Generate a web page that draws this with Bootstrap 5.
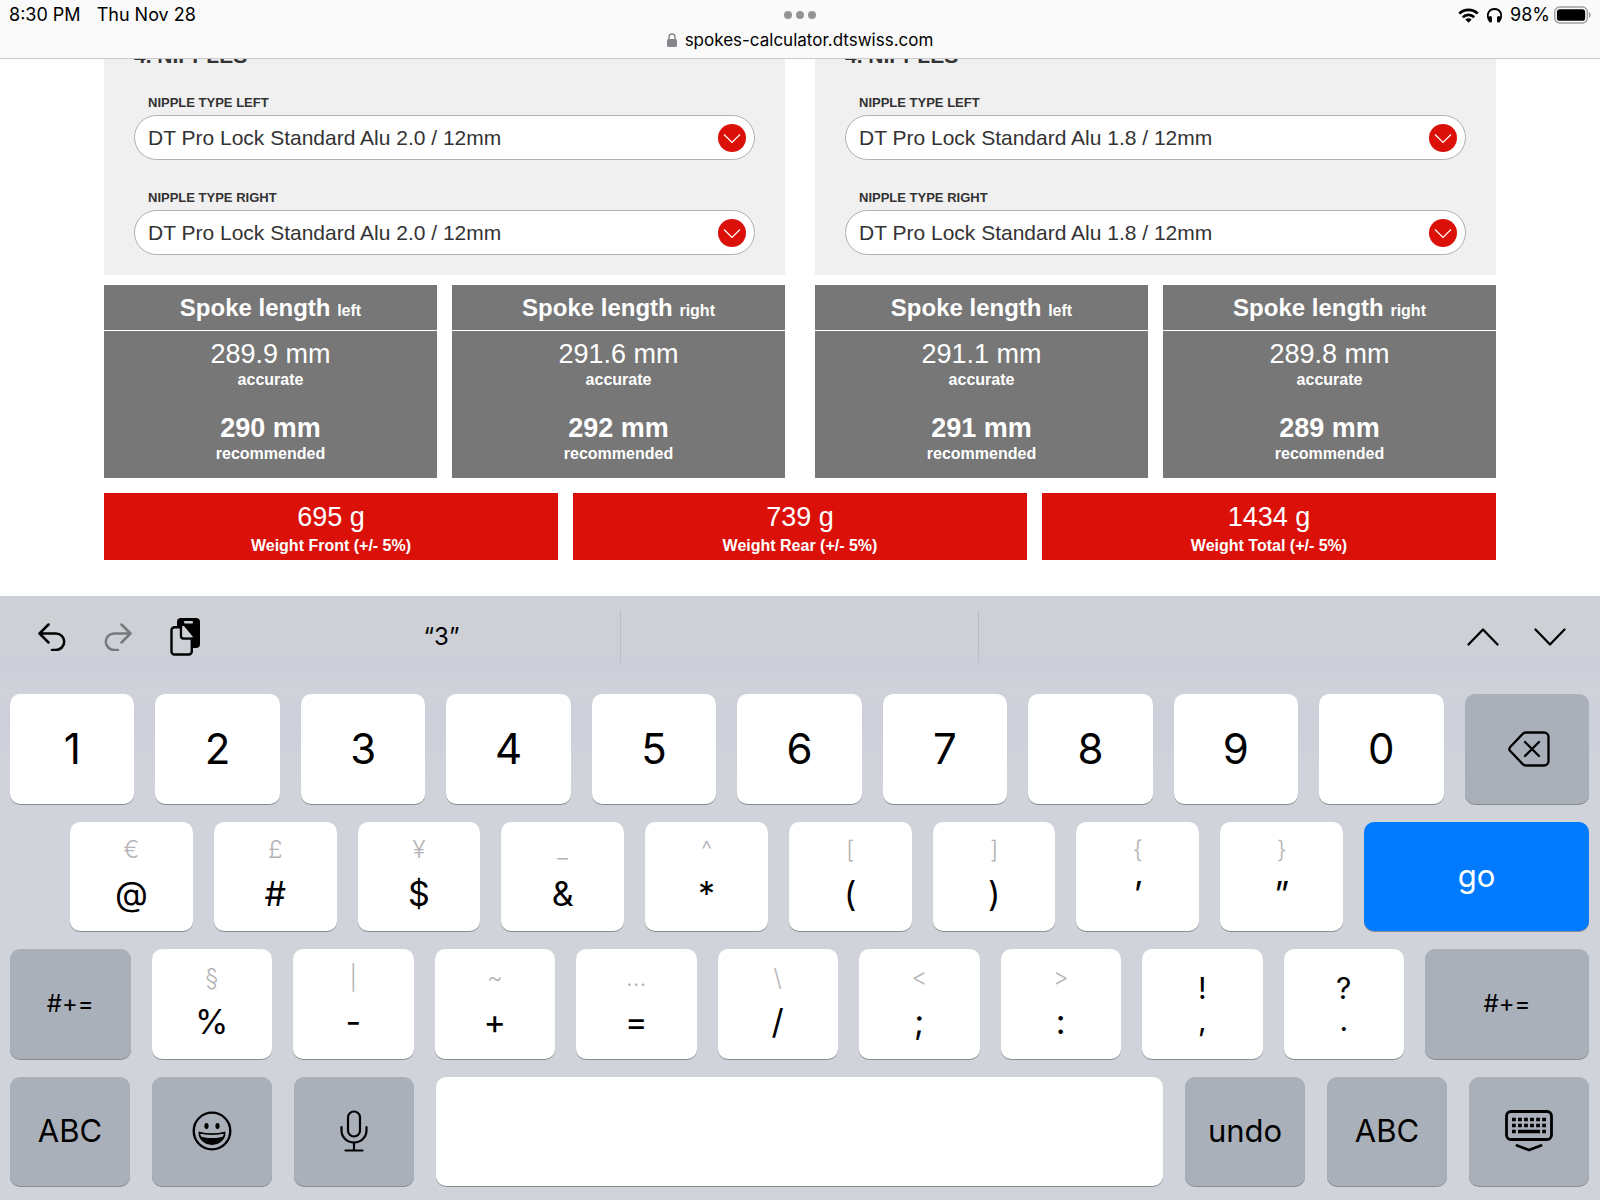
<!DOCTYPE html>
<html lang="en">
<head>
<meta charset="utf-8">
<meta name="viewport" content="width=device-width, initial-scale=1">
<title>DT Swiss Spokes Calculator</title>
<link rel="stylesheet" href="https://cdn.jsdelivr.net/npm/bootstrap@5.3.0/dist/css/bootstrap.min.css">
<style>
  body { font-family: "Liberation Sans", Arial, sans-serif; color: #333; background: #fff; }
  .ios { font-family: Inter, Roboto, sans-serif; color: #000; }

  /* browser bar */
  .topbar { background: #fafafa; border-bottom: 1px solid #c9c9cb; font-size: 18px; line-height: 20px; padding: 5px 9px 3px; }
  .topbar .side { flex: 1 1 0; }
  .url { font-size: 17px; line-height: 22px; margin-top: 4px; padding-bottom: 4px; color: #000; }

  /* calculator */
  .calc { padding: 0 104px 36px; }
  .gap-wide { gap: 30px; }
  .gap-slim { gap: 15px; }
  .half { flex: 1 1 0; min-width: 0; }
  .panel { background: #f0f0f0; padding: 0 30px 20px; margin-bottom: 10px; }
  .panel h2 { font-size: 21px; line-height: 24px; font-weight: 700; margin: -15px 0 27px; color: #333; }
  .panel label { display: block; font-size: 13px; line-height: 16px; font-weight: 700; margin: 0 0 4px 14px; }
  .panel .field + .field { margin-top: 30px; }
  .panel .form-select {
    height: 45px; border: 1px solid #b0b0b0; border-radius: 23px;
    font-size: 21px; line-height: 24px; color: #333; padding: 0 48px 0 13px;
    background: #fff url("data:image/svg+xml,%3Csvg xmlns='http://www.w3.org/2000/svg' viewBox='0 0 28 28'%3E%3Ccircle cx='14' cy='14' r='14' fill='%23db1109'/%3E%3Cpath d='M6 10.500l8 8 8-8' fill='none' stroke='%23fff' stroke-width='1.200'/%3E%3C/svg%3E") no-repeat right 8px center / 28px 28px;
  }
  .result { background: #777; color: #fff; text-align: center; }
  .result h3 { font-size: 24px; line-height: 45px; font-weight: 700; margin: 0; border-bottom: 1px solid #fff; }
  .result h3 span { font-size: 16px; line-height: 16px; }
  .result dl { margin: 0; padding: 8px 0 14px; display: flex; flex-direction: column; }
  .num { font-size: 27px; line-height: 30px; font-weight: 400; margin: 0; }
  .cap { font-size: 16px; line-height: 21px; font-weight: 700; margin: 0; }
  .rec { margin-top: 23px; }
  .weights { padding-top: 15px; }
  .weight { background: #db1109; color: #fff; text-align: center; padding: 9px 0 4px; }
  .weight .cap { margin-top: 3px; }

  /* on-screen keyboard */
  .kbd-area { background: linear-gradient(#cdd0d4 0, #cdd0d6 50px, #cccfda 75px, #cfd2d8 95px, #cdd0da 120px, #d0d3d9 190px); padding: 0 11px 14px 10px; }
  .tools { height: 82px; margin-bottom: 16px; }
  .tools .edge { width: 253px; }
  .tools .edit { gap: 38px; padding-left: 28px; }
  .tools .step { gap: 35px; padding-right: 23px; }
  .tools button { background: none; border: 0; padding: 0; line-height: 0; color: #000; }
  .tools .hint { font-size: 24px; line-height: 52px; height: 52px; }
  .hint + .hint { border-left: 1px solid #babdc3; }
  .keys { gap: 18px; }
  .keyrow { gap: 21px; flex: 1 1 0; }
  .keyrow-fn { gap: 22px; }
  .indent { padding-left: 60px; }
  .key {
    flex: 1 1 0; min-width: 0; min-height: 80px; border: 0; border-radius: 10px; padding: 0; background: #fff; color: #000;
    box-shadow: 0 1px 0 #898c91; font-size: 42px; line-height: 48px;
    display: flex; flex-direction: column; align-items: center; justify-content: center;
  }
  .dim { background: #aab0ba; }
  .word { font-size: 31px; line-height: 36px; }
  .sym { font-size: 24px; line-height: 28px; }
  .alt { font-size: 24px; line-height: 28px; font-weight: 300; color: #b4b4b6; margin-bottom: 8px; }
  .main { font-size: 34px; line-height: 44px; }
  .punct { font-size: 30px; line-height: 32px; }
  .go { background: #007aff; color: #fff; flex: 0 0 225px; }
  .k-shift { flex: 0 0 164px; }
  .k-fn { flex: 0 0 120px; }
</style>
</head>
<body class="d-flex flex-column min-vh-100">

<header class="topbar ios">
  <div class="d-flex align-items-center">
    <div class="side d-flex gap-3"><span>8:30 PM</span><span>Thu Nov 28</span></div>
    <svg width="32" height="8" viewBox="0 0 32 8" fill="#949496"><circle cx="4" cy="4" r="4"/><circle cx="16" cy="4" r="4"/><circle cx="28" cy="4" r="4"/></svg>
    <div class="side d-flex justify-content-end align-items-center">
      <svg class="me-2" width="21" height="15" viewBox="0 0 21 15"><g fill="none" stroke="#000" stroke-width="2.700"><path d="M1.300 5.600a13 13 0 0 1 18.400 0"/><path d="M4.800 9.200a8 8 0 0 1 11.400 0"/></g><path d="M10.500 14.800l-3.200-3.300a4.600 4.600 0 0 1 6.400 0z"/></svg>
      <svg class="me-2" width="15" height="15" viewBox="0 0 15 15"><path d="M2.300 12.500C-1.200 6.500 2 1 7.500 1s8.700 5.500 5.200 11.500" fill="none" stroke="#000" stroke-width="1.800"/><rect x="1.800" y="8" width="3.200" height="6.500" rx="1.500"/><rect x="10" y="8" width="3.200" height="6.500" rx="1.500"/></svg>
      <span class="me-1">98%</span>
      <svg width="37" height="18" viewBox="0 0 38 18"><rect x=".8" y=".8" width="33.400" height="16.400" rx="5" fill="none" stroke="#a0a0a0" stroke-width="1.500"/><rect x="3" y="3" width="29" height="12" rx="3"/><path d="M35.800 6c2.600.8 2.600 5.200 0 6z" fill="#a0a0a0"/></svg>
    </div>
  </div>
  <div class="url d-flex justify-content-center align-items-center">
    <svg class="me-2" width="10" height="14" viewBox="0 0 10 14"><path d="M2 7V4a3 3 0 0 1 6 0v3" fill="none" stroke="#85858a" stroke-width="1.400"/><rect y="6" width="10" height="8" rx="1.500" fill="#85858a"/></svg>
    <span>spokes-calculator.dtswiss.com</span>
  </div>
</header>

<main class="calc overflow-hidden">
  <div class="d-flex gap-wide">
    <section class="half">
      <div class="panel">
        <h2>4. NIPPLES</h2>
        <div class="field"><label for="fl">NIPPLE TYPE LEFT</label>
          <select class="form-select" id="fl"><option>DT Pro Lock Standard Alu 2.0 / 12mm</option></select></div>
        <div class="field"><label for="fr">NIPPLE TYPE RIGHT</label>
          <select class="form-select" id="fr"><option>DT Pro Lock Standard Alu 2.0 / 12mm</option></select></div>
      </div>
      <div class="d-flex gap-slim">
        <div class="result half"><h3>Spoke length <span>left</span></h3>
          <dl><dd class="num">289.9 mm</dd><dt class="cap">accurate</dt><dd class="num fw-bold rec">290 mm</dd><dt class="cap">recommended</dt></dl></div>
        <div class="result half"><h3>Spoke length <span>right</span></h3>
          <dl><dd class="num">291.6 mm</dd><dt class="cap">accurate</dt><dd class="num fw-bold rec">292 mm</dd><dt class="cap">recommended</dt></dl></div>
      </div>
    </section>
    <section class="half">
      <div class="panel">
        <h2>4. NIPPLES</h2>
        <div class="field"><label for="rl">NIPPLE TYPE LEFT</label>
          <select class="form-select" id="rl"><option>DT Pro Lock Standard Alu 1.8 / 12mm</option></select></div>
        <div class="field"><label for="rr">NIPPLE TYPE RIGHT</label>
          <select class="form-select" id="rr"><option>DT Pro Lock Standard Alu 1.8 / 12mm</option></select></div>
      </div>
      <div class="d-flex gap-slim">
        <div class="result half"><h3>Spoke length <span>left</span></h3>
          <dl><dd class="num">291.1 mm</dd><dt class="cap">accurate</dt><dd class="num fw-bold rec">291 mm</dd><dt class="cap">recommended</dt></dl></div>
        <div class="result half"><h3>Spoke length <span>right</span></h3>
          <dl><dd class="num">289.8 mm</dd><dt class="cap">accurate</dt><dd class="num fw-bold rec">289 mm</dd><dt class="cap">recommended</dt></dl></div>
      </div>
    </section>
  </div>
  <div class="weights d-flex gap-slim">
    <div class="weight half"><p class="num">695 g</p><p class="cap">Weight Front (+/- 5%)</p></div>
    <div class="weight half"><p class="num">739 g</p><p class="cap">Weight Rear (+/- 5%)</p></div>
    <div class="weight half"><p class="num">1434 g</p><p class="cap">Weight Total (+/- 5%)</p></div>
  </div>
</main>

<section class="kbd-area ios flex-grow-1 d-flex flex-column" aria-label="Keyboard">
  <div class="tools d-flex align-items-center">
    <div class="edge edit d-flex align-items-center">
      <button type="button" aria-label="Undo"><svg width="28" height="28" viewBox="0 0 28 28" fill="none" stroke="currentColor" stroke-width="2.500" stroke-linecap="round" stroke-linejoin="round"><path d="M10.500 1.500L1.500 10.500l9 9M1.500 10.500H18a8.200 8.200 0 0 1 0 16.400h-4"/></svg></button>
      <button type="button" aria-label="Redo" disabled><svg width="28" height="28" viewBox="0 0 28 28" fill="none" stroke="#77797d" stroke-width="2.500" stroke-linecap="round" stroke-linejoin="round"><path d="M17.500 1.500l9 9-9 9M26.500 10.500H10a8.200 8.200 0 0 0 0 16.400h4"/></svg></button>
      <button type="button" aria-label="Paste"><svg width="30" height="38" viewBox="0 0 30 38"><path d="M11 0h15a4 4 0 0 1 4 4v22a4 4 0 0 1-4 4h-3V19L14 8H7V4a4 4 0 0 1 4-4z"/><rect x="14" y="3" width="9" height="2.500" rx="1.200" fill="#cdd0d4"/><path d="M4.500 9.200H11V18a2.500 2.500 0 0 0 2.500 2.500h8.300v13a3 3 0 0 1-3 3H4.500a3 3 0 0 1-3-3V12.200a3 3 0 0 1 3-3z" fill="none" stroke="#000" stroke-width="2.400"/><path d="M12.500 10.500l8.500 8.800h-7a1.500 1.500 0 0 1-1.500-1.500z" fill="#cdd0d4"/></svg></button>
    </div>
    <div class="flex-grow-1 d-flex text-center">
      <div class="hint half">“3”</div><div class="hint half"></div><div class="hint half"></div>
    </div>
    <div class="edge step d-flex justify-content-end">
      <button type="button" aria-label="Previous field"><svg width="32" height="18" viewBox="0 0 32 18" fill="none" stroke="#000" stroke-width="2.300" stroke-linecap="round" stroke-linejoin="round"><path d="M1.500 16.500L16 1.500l14.500 15"/></svg></button>
      <button type="button" aria-label="Next field"><svg width="32" height="18" viewBox="0 0 32 18" fill="none" stroke="#000" stroke-width="2.300" stroke-linecap="round" stroke-linejoin="round"><path d="M1.500 1.500L16 16.500l14.500-15"/></svg></button>
    </div>
  </div>

  <div class="keys flex-grow-1 d-flex flex-column">
    <div class="keyrow d-flex">
      <button class="key">1</button><button class="key">2</button><button class="key">3</button><button class="key">4</button><button class="key">5</button><button class="key">6</button><button class="key">7</button><button class="key">8</button><button class="key">9</button><button class="key">0</button>
      <button class="key dim" aria-label="Delete"><svg class="ms-1" width="42" height="36" viewBox="0 0 42 36" fill="none" stroke="#000" stroke-width="2.300" stroke-linejoin="round" stroke-linecap="round"><path d="M18 1.500h18a4.500 4.500 0 0 1 4.500 4.500v24a4.500 4.500 0 0 1-4.500 4.500H18a4.500 4.500 0 0 1-3.300-1.400L2.200 20a3 3 0 0 1 0-4L14.700 2.900A4.500 4.500 0 0 1 18 1.500zM17 11l14 14M31 11L17 25"/></svg></button>
    </div>
    <div class="keyrow d-flex indent">
      <button class="key"><span class="alt">€</span><span class="main">@</span></button>
      <button class="key"><span class="alt">£</span><span class="main">#</span></button>
      <button class="key"><span class="alt">¥</span><span class="main">$</span></button>
      <button class="key"><span class="alt">_</span><span class="main">&amp;</span></button>
      <button class="key"><span class="alt">^</span><span class="main">*</span></button>
      <button class="key"><span class="alt">[</span><span class="main">(</span></button>
      <button class="key"><span class="alt">]</span><span class="main">)</span></button>
      <button class="key"><span class="alt">{</span><span class="main">’</span></button>
      <button class="key"><span class="alt">}</span><span class="main">”</span></button>
      <button class="key go word">go</button>
    </div>
    <div class="keyrow d-flex">
      <button class="key dim sym">#+=</button>
      <button class="key"><span class="alt">§</span><span class="main">%</span></button>
      <button class="key"><span class="alt">|</span><span class="main">-</span></button>
      <button class="key"><span class="alt">~</span><span class="main">+</span></button>
      <button class="key"><span class="alt">…</span><span class="main">=</span></button>
      <button class="key"><span class="alt">\</span><span class="main">/</span></button>
      <button class="key"><span class="alt">&lt;</span><span class="main">;</span></button>
      <button class="key"><span class="alt">&gt;</span><span class="main">:</span></button>
      <button class="key punct"><span>!</span><span>,</span></button>
      <button class="key punct"><span>?</span><span>.</span></button>
      <button class="key dim sym k-shift">#+=</button>
    </div>
    <div class="keyrow keyrow-fn d-flex">
      <button class="key dim word k-fn">ABC</button>
      <button class="key dim k-fn" aria-label="Emoji"><svg width="40" height="40" viewBox="0 0 40 40"><circle cx="20" cy="20" r="18.300" fill="none" stroke="#000" stroke-width="2.300"/><ellipse cx="14.500" cy="15" rx="2.100" ry="2.900"/><ellipse cx="25.500" cy="15" rx="2.100" ry="2.900"/><path d="M7.500 21.500c7 2.200 18 2.200 25 0 .5 6.500-5.500 11.500-12.500 11.500S7 28 7.500 21.500z" fill="none" stroke="#000" stroke-width="1.800" stroke-linejoin="round"/><path d="M9 25.500c6 2 16 2 22 0-1.500 4.500-6 7-11 7s-9.500-2.500-11-7z"/></svg></button>
      <button class="key dim k-fn" aria-label="Dictate"><svg width="28" height="42" viewBox="0 0 28 42" fill="none" stroke="#000" stroke-width="2.200" stroke-linecap="round"><rect x="8" y="1.500" width="12" height="25" rx="6"/><path d="M1.500 17v3.500a12.500 12 0 0 0 25 0V17M14 32.500V40M5.500 40.500h17"/></svg></button>
      <button class="key" aria-label="Space"></button>
      <button class="key dim word k-fn">undo</button>
      <button class="key dim word k-fn">ABC</button>
      <button class="key dim k-fn" aria-label="Hide keyboard"><svg width="48" height="42" viewBox="0 0 48 42"><rect x="1.500" y="1.500" width="45" height="28" rx="4.500" fill="none" stroke="#000" stroke-width="2.800"/><path d="M7 9.500h34M7 15.500h34" stroke="#000" stroke-width="3.400" stroke-dasharray="3.800 2.240"/><path d="M7 21.500h3.800M13 21.500h22M37.200 21.500H41" stroke="#000" stroke-width="3.400"/><path d="M12 35.500l12 4.500 12-4.500" fill="none" stroke="#000" stroke-width="2.800" stroke-linecap="round" stroke-linejoin="round"/></svg></button>
    </div>
  </div>
</section>

<script src="https://cdn.jsdelivr.net/npm/bootstrap@5.3.0/dist/js/bootstrap.bundle.min.js"></script>
</body>
</html>
